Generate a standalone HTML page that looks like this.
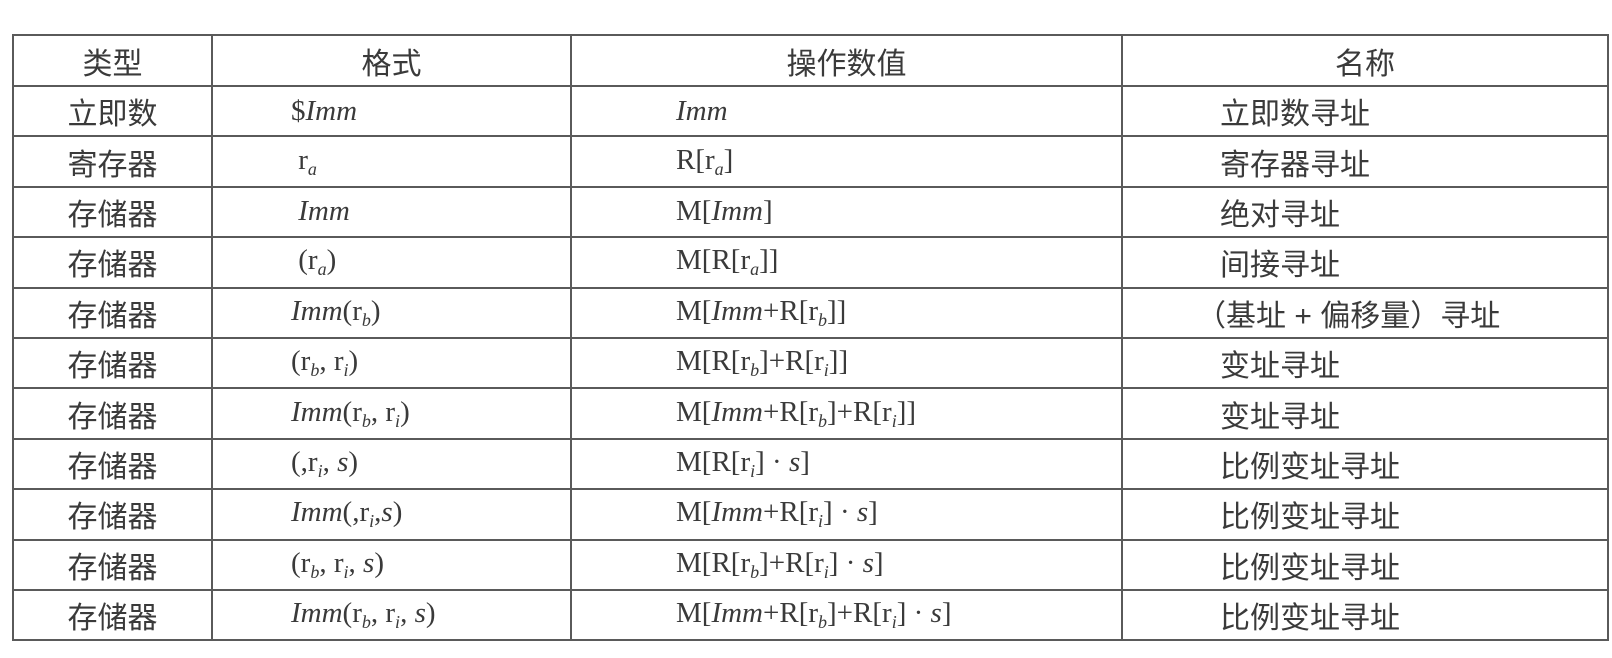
<!DOCTYPE html>
<html><head><meta charset="utf-8"><style>
body{margin:0;background:#fff;width:1612px;height:658px;overflow:hidden;}
table{position:absolute;left:12px;top:34px;border-collapse:collapse;font-family:"Liberation Serif","Noto Serif CJK SC",serif;color:#3a3a3a;font-size:29px;}
td,th{border:2px solid #5a5a5a;height:48.4px;padding:0;font-weight:normal;white-space:nowrap;}
th{height:49px;}
td:nth-child(1){text-align:center;font-family:"Liberation Sans","Noto Sans CJK SC",sans-serif;font-size:30px;}
td:nth-child(2){padding-left:78px;}
td:nth-child(3){padding-left:104px;}
td:nth-child(4){padding-left:97px;font-family:"Liberation Sans","Noto Sans CJK SC",sans-serif;font-size:30px;}
th{font-family:"Liberation Sans","Noto Sans CJK SC",sans-serif;text-align:center;font-size:30px;}
i{font-style:italic}
sub{font-size:18px;vertical-align:-6px;font-style:italic}
</style></head><body>
<table>
<colgroup><col style="width:199px"><col style="width:359px"><col style="width:551px"><col style="width:486px"></colgroup>
<tr><th>类型</th><th>格式</th><th>操作数值</th><th>名称</th></tr>
<tr><td>立即数</td><td>$<i>Imm</i></td><td><i>Imm</i></td><td>立即数寻址</td></tr>
<tr><td>寄存器</td><td>&nbsp;r<sub>a</sub></td><td>R[r<sub>a</sub>]</td><td>寄存器寻址</td></tr>
<tr><td>存储器</td><td>&nbsp;<i>Imm</i></td><td>M[<i>Imm</i>]</td><td>绝对寻址</td></tr>
<tr><td>存储器</td><td>&nbsp;(r<sub>a</sub>)</td><td>M[R[r<sub>a</sub>]]</td><td>间接寻址</td></tr>
<tr><td>存储器</td><td><i>Imm</i>(r<sub>b</sub>)</td><td>M[<i>Imm</i>+R[r<sub>b</sub>]]</td><td style="padding-left:73px">（基址 + 偏移量）寻址</td></tr>
<tr><td>存储器</td><td>(r<sub>b</sub>, r<sub>i</sub>)</td><td>M[R[r<sub>b</sub>]+R[r<sub>i</sub>]]</td><td>变址寻址</td></tr>
<tr><td>存储器</td><td><i>Imm</i>(r<sub>b</sub>, r<sub>i</sub>)</td><td>M[<i>Imm</i>+R[r<sub>b</sub>]+R[r<sub>i</sub>]]</td><td>变址寻址</td></tr>
<tr><td>存储器</td><td>(,r<sub>i</sub>, <i>s</i>)</td><td>M[R[r<sub>i</sub>] · <i>s</i>]</td><td>比例变址寻址</td></tr>
<tr><td>存储器</td><td><i>Imm</i>(,r<sub>i</sub>,<i>s</i>)</td><td>M[<i>Imm</i>+R[r<sub>i</sub>] · <i>s</i>]</td><td>比例变址寻址</td></tr>
<tr><td>存储器</td><td>(r<sub>b</sub>, r<sub>i</sub>, <i>s</i>)</td><td>M[R[r<sub>b</sub>]+R[r<sub>i</sub>] · <i>s</i>]</td><td>比例变址寻址</td></tr>
<tr><td>存储器</td><td><i>Imm</i>(r<sub>b</sub>, r<sub>i</sub>, <i>s</i>)</td><td>M[<i>Imm</i>+R[r<sub>b</sub>]+R[r<sub>i</sub>] · <i>s</i>]</td><td>比例变址寻址</td></tr>
</table>
</body></html>
